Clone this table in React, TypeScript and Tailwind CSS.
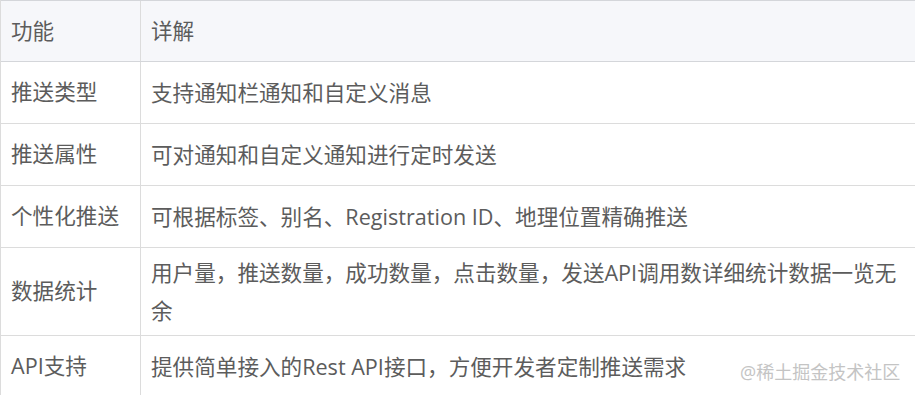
const rows = [
  { name: "推送类型", detail: "支持通知栏通知和自定义消息", tall: false },
  { name: "推送属性", detail: "可对通知和自定义通知进行定时发送", tall: false },
  { name: "个性化推送", detail: "可根据标签、别名、Registration ID、地理位置精确推送", tall: false },
  {
    name: "数据统计",
    detail: "用户量，推送数量，成功数量，点击数量，发送API调用数详细统计数据一览无余",
    tall: true,
  },
  { name: "API支持", detail: "提供简单接入的Rest API接口，方便开发者定制推送需求", tall: false },
];

export default function App() {
  return (
    <div
      className="relative w-[915px] h-[395px] overflow-hidden bg-white text-[#5c5c5c] text-[21.6px]"
      style={{ fontFamily: '"Open Sans", "Noto Sans CJK SC", sans-serif' }}
    >
      <div className="border-l border-[#dcdcdc]">
        {/* header */}
        <div className="flex h-[62px] border-t border-b border-[#d4d6da] bg-[#f6f7fa]">
          <div className="w-[140px] shrink-0 flex items-center pl-[10px] border-r border-[#dcdcdc]">功能</div>
          <div className="flex-1 flex items-center pl-[10px]">详解</div>
        </div>

        {rows.map((r) => (
          <div
            key={r.name}
            className={
              r.tall
                ? "flex h-[88px] border-b border-[#dcdcdc]"
                : "flex h-[62px] border-b border-[#dcdcdc]"
            }
          >
            <div className="w-[140px] shrink-0 flex items-center pl-[10px] border-r border-[#dcdcdc] whitespace-nowrap">
              {r.name}
            </div>
            <div className="flex-1 flex items-center pl-[10px] pr-[10px] leading-[38px]">
              <span>{r.detail}</span>
            </div>
          </div>
        ))}
      </div>

      {/* watermark */}
      <div className="absolute left-[740px] top-[360px] text-[18px] leading-[24px] text-[#c4c4c4] whitespace-nowrap">
        @稀土掘金技术社区
      </div>
    </div>
  );
}
